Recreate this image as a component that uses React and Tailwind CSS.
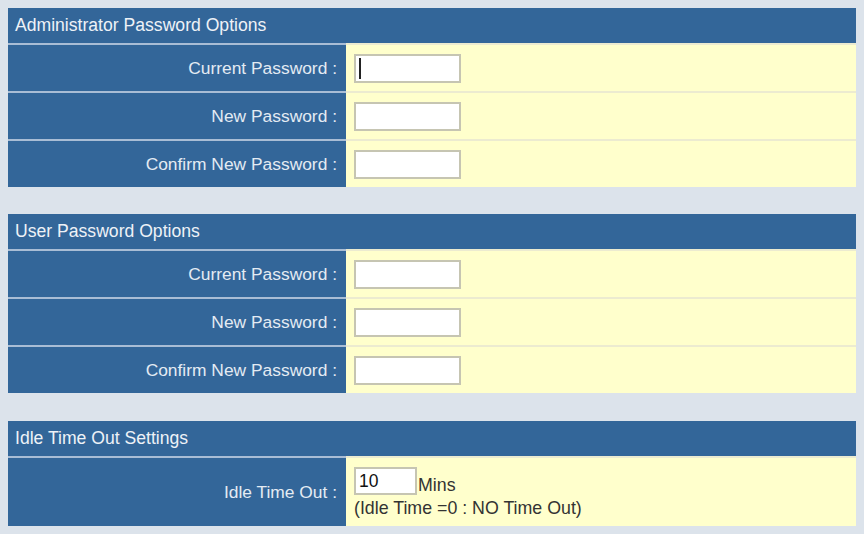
import React from "react";

const font = { fontFamily: '"Liberation Sans", Arial, sans-serif' };

function Header({ children }) {
  return (
    <div className="h-[35px] bg-[#336699] flex items-center pl-[7px] text-[17.6px] text-[#eef2f7]">
      {children}
    </div>
  );
}

function Row({ label, children, h = "h-[48px]" }) {
  return (
    <div className={`flex ${h}`}>
      <div className="w-[338px] shrink-0 bg-[#336699] border-t-2 border-[#a9bdd5] flex items-center justify-end pr-[9px] text-[17.4px] text-[#e4ebf3]">
        {label}
      </div>
      <div className="flex-1 bg-[#ffffcc] border-t-2 border-[#ecebd0] flex items-center pl-[8px]">
        {children}
      </div>
    </div>
  );
}

function Field({ cursor }) {
  return (
    <div className="w-[107px] h-[29px] bg-white border-2 border-[#c6c5b2] relative">
      {cursor && <div className="absolute left-[3px] top-[2px] w-[2px] h-[21px] bg-[#222]" />}
    </div>
  );
}

function PwSection({ title, first }) {
  return (
    <div>
      <Header>{title}</Header>
      <Row label="Current Password :"><Field cursor={first} /></Row>
      <Row label="New Password :"><Field /></Row>
      <Row label="Confirm New Password :"><Field /></Row>
    </div>
  );
}

export default function App() {
  return (
    <div className="w-[864px] h-[534px] bg-[#dce3eb] pt-[8px] px-[8px] overflow-hidden" style={font}>
      <PwSection title="Administrator Password Options" first />
      <div className="mt-[27px]">
        <PwSection title="User Password Options" />
      </div>
      <div className="mt-[28px]">
        <Header>Idle Time Out Settings</Header>
        <Row label="Idle Time Out :" h="h-[70px]">
          <div className="flex flex-col text-[17.8px] text-[#333] leading-[20px] mt-[1px]">
            <div className="flex items-center">
              <div className="w-[63px] h-[28px] bg-white border-2 border-[#c6c5b2] flex items-center pl-[3px] text-[17.5px] text-[#111]">
                10
              </div>
              <span className="ml-[1px] mt-[8px]">Mins</span>
            </div>
            <div className="mt-[3px]">(Idle Time =0 : NO Time Out)</div>
          </div>
        </Row>
      </div>
    </div>
  );
}
